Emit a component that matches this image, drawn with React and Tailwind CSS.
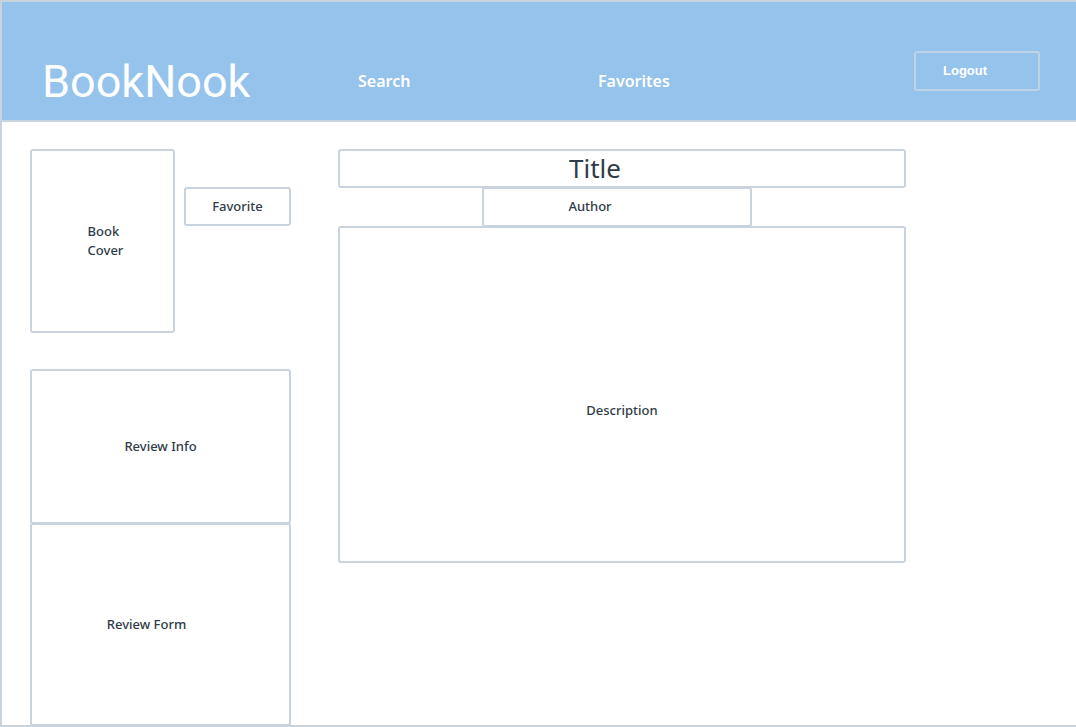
const box = 'border-2 border-[#c8d3de] rounded-[3px] bg-white flex items-center justify-center text-[#2f3b48]'

export default function App() {
  return (
    <div className="w-[1076px] h-[727px] overflow-hidden bg-white border-l-2 border-t-2 border-b-2 border-[#c8d3de] font-['Noto_Sans',sans-serif]">
      {/* Header */}
      <header className="h-[120px] bg-[#96c3eb] border-b-2 border-[#c8d3de] flex items-end">
        <h1 className="mb-[16px] ml-[40px] w-[316px] text-[45px] leading-none text-white font-['Roboto',sans-serif]">BookNook</h1>
        <nav className="flex items-end mb-[27px] text-white font-semibold text-[16px]">
          <span className="w-[240px]">Search</span>
          <span className="w-[316px]">Favorites</span>
        </nav>
        <button className="mb-[29px] w-[126px] h-[40px] border-2 border-[#bcd3e8] rounded-[3px] text-left pl-[27px] text-white text-[13px] font-bold font-['Liberation_Sans',sans-serif]">
          Logout
        </button>
      </header>

      {/* Body */}
      <main className="flex pt-[27px] pl-[28px] text-[13px] font-medium">
        <div className="w-[261px] flex flex-col">
          <div className="flex items-start gap-[9px]">
            <div className={box + ' w-[145px] h-[184px] pl-[6px]'}>
              <p className="text-left leading-[19px]">Book<br />Cover</p>
            </div>
            <div className={box + ' mt-[38px] w-[107px] h-[39px]'}>Favorite</div>
          </div>
          <div className={box + ' mt-[36px] h-[155px]'}>Review Info</div>
          <div className={box + ' -mt-px h-[203px] pr-[28px]'}>Review Form</div>
        </div>

        <div className="ml-[47px] w-[568px] flex flex-col">
          <div className={box + ' h-[39px] text-[26px] font-normal pr-[54px]'}>Title</div>
          <div className={box + ' -mt-px ml-[144px] w-[270px] h-[40px] pr-[54px]'}>Author</div>
          <div className={box + ' -mt-px h-[337px] pt-[32px]'}>Description</div>
        </div>
      </main>
    </div>
  )
}
